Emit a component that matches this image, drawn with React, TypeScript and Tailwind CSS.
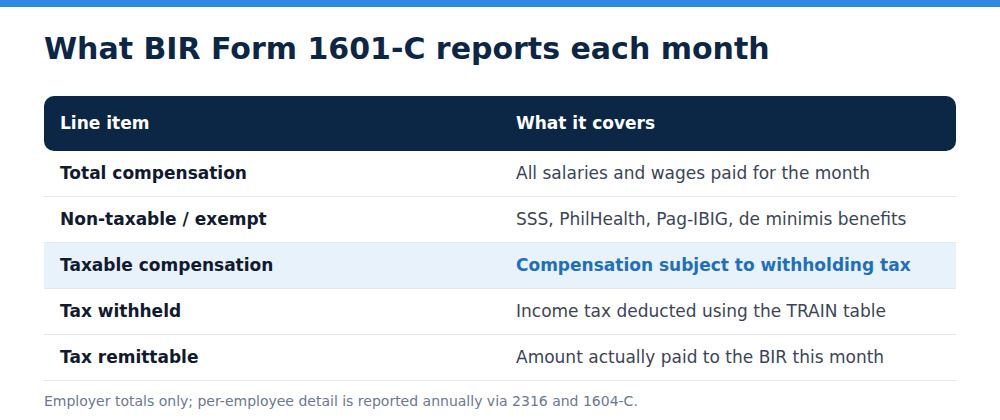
const rows = [
  { item: "Total compensation", covers: "All salaries and wages paid for the month" },
  { item: "Non-taxable / exempt", covers: "SSS, PhilHealth, Pag-IBIG, de minimis benefits" },
  { item: "Taxable compensation", covers: "Compensation subject to withholding tax", highlight: true },
  { item: "Tax withheld", covers: "Income tax deducted using the TRAIN table" },
  { item: "Tax remittable", covers: "Amount actually paid to the BIR this month" },
];

export default function App() {
  return (
    <div className="h-[420px] w-[1000px] overflow-hidden bg-white font-['DejaVu_Sans',sans-serif]">
      <div className="h-[7px] bg-[#2e8ae0]" />
      <div className="px-[44px]">
        <h1 className="mt-[22px] text-[30px] leading-[40px] font-bold text-[#0c2645]">
          What BIR Form 1601-C reports each month
        </h1>

        {/* table */}
        <div className="mt-[27px]">
          <div className="grid h-[55px] grid-cols-2 items-center rounded-[10px] bg-[#0c2645] text-[17px] font-bold text-white">
            <div className="px-4">Line item</div>
            <div className="px-4">What it covers</div>
          </div>
          {rows.map((row) => (
            <div
              key={row.item}
              className={`grid h-[46px] grid-cols-2 items-center border-b border-[#e2e8f0] text-[17px] ${
                row.highlight ? "bg-[#e8f2fb]" : ""
              }`}
            >
              <div className="px-4 font-bold text-[#111a2e]">{row.item}</div>
              <div
                className={`px-4 ${
                  row.highlight ? "font-bold text-[#1f6fbf]" : "text-[#3b4556]"
                }`}
              >
                {row.covers}
              </div>
            </div>
          ))}
        </div>

        <p className="mt-[10px] text-[14px] text-[#6b7890]">
          Employer totals only; per-employee detail is reported annually via 2316 and 1604-C.
        </p>
      </div>
    </div>
  );
}
